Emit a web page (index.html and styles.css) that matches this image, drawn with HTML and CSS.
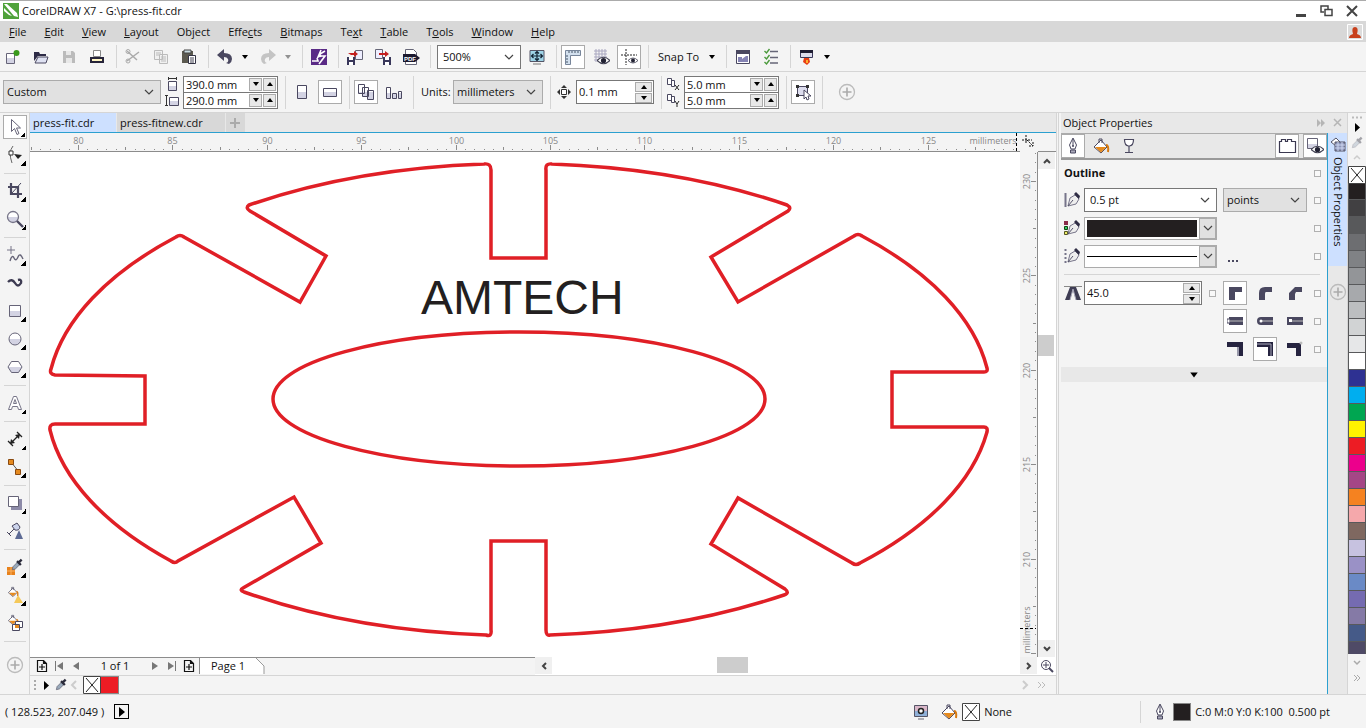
FILE: index.html
```html
<!DOCTYPE html>
<html lang="en">
<head>
    <meta charset="UTF-8">
    <meta name="viewport" content="width=device-width, initial-scale=1.0">
    <title>CorelDRAW X7 - G:\press-fit.cdr</title>
    <link rel="stylesheet" href="styles.css">
</head>
<body>
    <!-- shared icon shapes -->
    <svg class="defs" width="0" height="0" aria-hidden="true">
        <defs>
            <linearGradient id="shade" x1="0" y1="0" x2="0" y2="1">
                <stop offset=".5" stop-color="#fff"/><stop offset=".5" stop-color="#d3d3e3"/>
            </linearGradient>
            <symbol id="chev" viewBox="0 0 12 12"><path d="M2 4l4 4 4-4" fill="none" stroke="#444" stroke-width="1.2"/></symbol>
            <symbol id="tri" viewBox="0 0 8 8"><path d="M1 2h6L4 6z"/></symbol>
            <symbol id="plus" viewBox="0 0 18 18"><circle cx="9" cy="9" r="7.500" fill="none" stroke="#bbb" stroke-width="1.3"/><path d="M9 4.500v9M4.500 9h9" stroke="#aaa" stroke-width="1.6"/></symbol>
            <symbol id="nib" viewBox="0 0 18 18"><path d="M9 1L5.500 8 7 12h4l1.500-4z" fill="#fff" stroke="#4a4860"/><path d="M9 2v7M6.500 13h5v3h-5z" stroke="#4a4860" fill="#aab"/><circle cx="9" cy="9" r="1" fill="#4a4860"/></symbol>
            <symbol id="bucket" viewBox="0 0 18 18"><path d="M2 10l7-7 6 7-6 6z" fill="#fff" stroke="#4a4860"/><path d="M3 10h11.500L9 15.500z" fill="#e58a1f"/><path d="M7 6V2h3v4" fill="none" stroke="#4a4860"/><path d="M14 8q3 0 2 7" fill="none" stroke="#d87a10" stroke-width="2"/></symbol>
            <symbol id="dropper" viewBox="0 0 18 18"><path d="M3 15l1-4 6-6 3 3-6 6z" fill="#9ab" stroke="#667"/><path d="M9 4l5 5M11 6l4-4" stroke="#2b2b3b" stroke-width="3"/></symbol>
            <symbol id="none" viewBox="0 0 18 18"><path d="M.5.5h17v17H.5z" fill="#fff" stroke="#444"/><path d="M3 2l12 14M15 2L3 16" stroke="#222"/></symbol>
            <symbol id="pen" viewBox="0 0 18 18"><path d="M4 15l2-8 5-3 4 4-3 5z" fill="#eee" stroke="#77758a"/><path d="M4 15l5-6" stroke="#55536a"/><path d="M10 3l2-2 4 4-1 3z" fill="#2f2d44"/></symbol>
            <symbol id="addpage" viewBox="0 0 12 12"><path d="M1.500.5h6l3 3v8h-9zM7.500.5v3h3M6 4v6M3 7h6" fill="none" stroke="#111" stroke-width="1.2"/></symbol>
            <symbol id="eye" viewBox="0 0 12 8"><path d="M0 4q6-6 12 0-6 6-12 0z" fill="#fff" stroke="#445"/><circle cx="6" cy="4" r="2.400" fill="#223"/></symbol>
        </defs>
    </svg>

    <header class="titlebar">
        <svg width="16" height="16" viewBox="0 0 16 16"><path fill="#4fa23a" d="M0 0h16v16H0z"/><path fill="#fff" d="M1 1l3 0 10 9 1 4-4-1zM1 5l8 8-3-1L1 8z"/></svg>
        <h1>CorelDRAW X7 - G:\press-fit.cdr</h1>
        <div class="window-buttons">
            <button aria-label="Minimize"><svg width="12" height="12"><path d="M1 10.500h10" stroke="#444" stroke-width="3"/></svg></button>
            <button aria-label="Restore"><svg width="13" height="12"><path d="M4 7H1V1h7v3M5 4.500h7v6H5z" fill="none" stroke="#444" stroke-width="1.500"/></svg></button>
            <button aria-label="Close"><svg width="12" height="12"><path d="M1 1l10 10M11 1L1 11" stroke="#444" stroke-width="2"/></svg></button>
        </div>
    </header>

    <nav class="menubar">
        <button><u>F</u>ile</button>
        <button><u>E</u>dit</button>
        <button><u>V</u>iew</button>
        <button><u>L</u>ayout</button>
        <button>Ob<u>j</u>ect</button>
        <button>Effe<u>c</u>ts</button>
        <button><u>B</u>itmaps</button>
        <button>Te<u>x</u>t</button>
        <button><u>T</u>able</button>
        <button>T<u>o</u>ols</button>
        <button><u>W</u>indow</button>
        <button><u>H</u>elp</button>
        <button class="account" aria-label="Sign in"><svg width="16" height="16"><path d="M.5.5h15v15H.5z" fill="#ddd" stroke="#fff"/><path d="M2 14q0-3 4-4Q4 3 8 3t2 7q4 1 4 4z" fill="#c8401c"/></svg></button>
    </nav>

    <div class="toolbar">
        <button class="tool" aria-label="New"><svg width="18" height="18"><path d="M2.500 5.500h8v10h-8z" fill="url(#shade)" stroke="#666478"/><circle cx="12.500" cy="5" r="3" fill="#3a9a1c"/></svg></button>
        <button class="tool" aria-label="Open"><svg width="18" height="18"><path d="M2 13V4h5l1 2h6v2H6z" fill="#2d2b46"/><path d="M3 15l3-6h10l-2 6z" fill="#dfe2f2" stroke="#4a4860"/></svg></button>
        <button class="tool" aria-label="Save"><svg width="18" height="18"><path d="M3 3h10l2 2v10H3z" fill="#bbb"/><path d="M6 3h5v4H6zM6 10h6v5H6z" fill="#e8e8e8"/></svg></button>
        <button class="tool" aria-label="Print"><svg width="18" height="18"><path d="M5.500 2.500h7v6h-7z" fill="#fff" stroke="#888"/><path d="M2 9h14v6H2z" fill="#26243a"/><path d="M4 11h10v2H4z" fill="#fff6c4"/></svg></button>
        <span class="sep"></span>
        <button class="tool" aria-label="Cut"><svg width="18" height="18"><path d="M3 3l10 9M3 13l12-9" stroke="#aaa" stroke-width="1.500"/><circle cx="4" cy="3.500" r="2" fill="none" stroke="#aaa"/><circle cx="4" cy="13" r="2" fill="none" stroke="#aaa"/></svg></button>
        <button class="tool" aria-label="Copy"><svg width="18" height="18"><path d="M2.500 2.500h8v9h-8zM7.500 6.500h8v9h-8z" fill="#f0f0f0" stroke="#bbb"/><path d="M9 9h5M9 11h5M9 13h5M4 5h5M4 7h3" stroke="#bbb"/></svg></button>
        <button class="tool" aria-label="Paste"><svg width="18" height="18"><path d="M2 3h11v12H2z" fill="#5b594f"/><path d="M4 2h7v3H4z" fill="#c9dbe0" stroke="#444"/><path d="M8.500 7.500h7v8h-7z" fill="#fff" stroke="#334"/><path d="M10 10h4M10 12h4M10 14h4" stroke="#445"/></svg></button>
        <span class="sep"></span>
        <button class="tool" aria-label="Undo"><svg width="18" height="18"><path d="M1 7l7-6v4q8 0 8 6 0 3-3 5l-3-1q3-1 2-4-1-2-4-2v4z" fill="#4a4860"/></svg></button>
        <button class="drop" aria-label="Undo list"><svg width="8" height="8"><use href="#tri"/></svg></button>
        <button class="tool" aria-label="Redo"><svg width="18" height="18"><path d="M17 7l-7-6v4q-8 0-8 6 0 3 3 5l3-1q-3-1-2-4 1-2 4-2v4z" fill="#c4c4c4"/></svg></button>
        <button class="drop dim" aria-label="Redo list"><svg width="8" height="8"><use href="#tri"/></svg></button>
        <span class="sep"></span>
        <button class="tool" aria-label="Search content"><svg width="18" height="18"><path d="M1 1h16v16H1z" fill="#5a2a86"/><path d="M11 2L8 9l2-1 5 0-6 8M2 13h6l-1-3M15 3l-5 3 1 3" fill="none" stroke="#fff" stroke-width="1.600"/></svg></button>
        <span class="sep"></span>
        <button class="tool" aria-label="Import"><svg width="18" height="18"><path d="M9.500 2.500h7v9h-7z" fill="#eef" stroke="#667"/><path d="M2 5h6V3l4 3-4 3V7H5" fill="#c41f1f"/><path d="M1 9h8v8H1z" fill="#39375a"/><path d="M3 9h4v3H3zM3 14h4v3H3z" fill="#fff"/></svg></button>
        <button class="tool" aria-label="Export"><svg width="18" height="18"><path d="M1.500 1.500h7v9h-7z" fill="#eef" stroke="#667"/><path d="M5 5h6V3l4 3-4 3V7H5" fill="#c41f1f"/><path d="M9 9h8v8H9z" fill="#39375a"/><path d="M11 9h4v3h-4zM11 14h4v3h-4z" fill="#fff"/></svg></button>
        <button class="tool" aria-label="Publish to PDF"><svg width="18" height="18"><path d="M3.500 1.500h8l3 3v12h-11z" fill="#fff" stroke="#667"/><path d="M1 6h12l5 4-5 4H1z" fill="#1c1a30"/><text x="2" y="13" class="pdf-label">PDF</text></svg></button>
        <span class="sep"></span>
        <div class="combo zoom-level">
            <select aria-label="Zoom levels"><option>500%</option></select>
            <svg width="12" height="12"><use href="#chev"/></svg>
        </div>
        <button class="tool" aria-label="Full-screen preview"><svg width="18" height="18"><path d="M2 2.500h14v11H2z" fill="#9fd4e8" stroke="#556"/><path d="M9 4v8M4 8h10M7 5.500L9 3.500l2 2M7 10.500l2 2 2-2M5.500 6l-2 2 2 2M12.500 6l2 2-2 2" fill="none" stroke="#123" stroke-width="1.200"/><path d="M5 16h8" stroke="#777"/></svg></button>
        <span class="sep"></span>
        <button class="tool on" aria-label="Show rulers"><svg width="18" height="18"><path d="M1.500 2.500h15v5h-10v9h-5z" fill="#d3e0ee" stroke="#77859a"/><path d="M5 3v2M8 3v2M11 3v2M14 3v2M2 8h2M2 11h2M2 14h2" stroke="#456"/></svg></button>
        <button class="tool" aria-label="Show grid"><svg width="18" height="18"><path d="M2 3h13M2 6h13M2 9h13M2 12h13M4 1v13M7 1v13M10 1v13M13 1v13" stroke="#a9a7c0"/><use href="#eye" x="5" y="8" width="13" height="9"/></svg></button>
        <button class="tool on" aria-label="Show guidelines"><svg width="18" height="18"><path d="M1 7h16M6 1v16" stroke="#222" stroke-dasharray="2 1"/><use href="#eye" x="8" y="9" width="10" height="7"/></svg></button>
        <span class="sep"></span>
        <button class="snap">Snap To <svg width="8" height="8"><use href="#tri"/></svg></button>
        <span class="sep"></span>
        <button class="tool" aria-label="Options"><svg width="18" height="18"><path d="M2.500 2.500h13v13h-13z" fill="#fff" stroke="#4a4860"/><path d="M2 2h14v4H2z" fill="#4a4860"/><path d="M4 9h4v2l4-3h2v6H4z" fill="#8583b4"/></svg></button>
        <button class="tool" aria-label="Object styles"><svg width="18" height="18"><path d="M8 3.500h8M8 9.500h8M8 15h8" stroke="#667" stroke-width="1.500"/><path d="M2.500 3l2 2 3-4M2.500 9l2 2 3-4M2.500 14l2 2 3-4" fill="none" stroke="#4b9a3c" stroke-width="1.400"/></svg></button>
        <span class="sep"></span>
        <button class="tool" aria-label="Application launcher"><svg width="18" height="18"><path d="M2.500 2.500h12v7h-12z" fill="#dcdcec" stroke="#39375a"/><path d="M2 2h13v3H2z" fill="#1f1d33"/><path d="M6 10h5l1 4-3 3-4-3z" fill="#e83d14"/><path d="M8 12h2v3H8z" fill="#ffb02e"/></svg></button>
        <button class="drop" aria-label="Launch list"><svg width="8" height="8"><use href="#tri"/></svg></button>
    </div>

    <div class="toolbar propbar">
        <div class="combo flat page-size">
            <select aria-label="Page size"><option>Custom</option></select>
            <svg width="12" height="12"><use href="#chev"/></svg>
        </div>
        <div class="pair">
            <svg width="14" height="14"><path d="M3.500 4.500h8v9h-8z" fill="url(#shade)" stroke="#4a4860"/><path d="M3 1.500h9M3.500 0v3M11.500 0v3" stroke="#333"/></svg>
            <div class="spin top"><input aria-label="Page width" value="390.0 mm"><button aria-label="Less"><svg width="8" height="8"><use href="#tri"/></svg></button><button class="up" aria-label="More"><svg width="8" height="8"><use href="#tri"/></svg></button></div>
            <svg width="14" height="14"><path d="M4.500 4.500h9v8h-9z" fill="url(#shade)" stroke="#4a4860"/><path d="M1.500 2v11M0 2.500h3M0 12.500h3" stroke="#333"/></svg>
            <div class="spin"><input aria-label="Page height" value="290.0 mm"><button aria-label="Less"><svg width="8" height="8"><use href="#tri"/></svg></button><button class="up" aria-label="More"><svg width="8" height="8"><use href="#tri"/></svg></button></div>
        </div>
        <span class="sep"></span>
        <button class="tool" aria-label="Portrait"><svg width="18" height="18"><path d="M4.500 2.500h9v13h-9z" fill="url(#shade)" stroke="#4a4860"/></svg></button>
        <button class="tool on" aria-label="Landscape"><svg width="18" height="18"><path d="M2.500 5.500h13v8h-13z" fill="url(#shade)" stroke="#4a4860"/></svg></button>
        <span class="sep"></span>
        <button class="tool on" aria-label="All pages"><svg width="18" height="18"><path d="M1.500 1.500h6v9h-6zM5.500 4.500h6v9h-6zM10.500 7.500h6v9h-6z" fill="url(#shade)" stroke="#4a4860"/></svg></button>
        <button class="tool" aria-label="Current page"><svg width="18" height="18"><path d="M1.500 4.500h4v11h-4zM7.500 10.500h4v5h-4zM13.500 8.500h3v7h-3z" fill="url(#shade)" stroke="#4a4860"/></svg></button>
        <span class="sep"></span>
        <div class="field">
            <label for="units">Units:</label>
            <div class="combo flat units">
                <select id="units"><option>millimeters</option></select>
                <svg width="12" height="12"><use href="#chev"/></svg>
            </div>
        </div>
        <span class="sep"></span>
        <div class="field nudge">
            <svg width="18" height="14"><path d="M6.500 4.500h5v5h-5z" fill="#fff" stroke="#333"/><path d="M9 0l3 3H6zM9 14l3-3H6zM2 7l3-3v6zM16 7l-3-3v6z" fill="#333"/></svg>
            <div class="spin tall"><input aria-label="Nudge distance" value="0.1 mm"><button class="up" aria-label="More"><svg width="8" height="8"><use href="#tri"/></svg></button><button aria-label="Less"><svg width="8" height="8"><use href="#tri"/></svg></button></div>
        </div>
        <span class="sep"></span>
        <div class="pair">
            <svg width="14" height="14"><path d="M1.500 1.500h4v6h-4zM5.500 3.500h3v6h-3z" fill="#fff" stroke="#4a4860"/><path d="M9 8l4 5M13 8l-4 5" stroke="#222"/></svg>
            <div class="spin top"><input aria-label="Duplicate X" value="5.0 mm"><button aria-label="Less"><svg width="8" height="8"><use href="#tri"/></svg></button><button class="up" aria-label="More"><svg width="8" height="8"><use href="#tri"/></svg></button></div>
            <svg width="14" height="14"><path d="M1.500 1.500h4v6h-4zM5.500 3.500h3v6h-3z" fill="#fff" stroke="#4a4860"/><path d="M9 8l2 3 2-3M11 11v3" fill="none" stroke="#222"/></svg>
            <div class="spin"><input aria-label="Duplicate Y" value="5.0 mm"><button aria-label="Less"><svg width="8" height="8"><use href="#tri"/></svg></button><button class="up" aria-label="More"><svg width="8" height="8"><use href="#tri"/></svg></button></div>
        </div>
        <span class="sep"></span>
        <button class="tool on" aria-label="Treat as filled"><svg width="18" height="18"><path d="M3.500 3.500h10v9h-10z" fill="#dde" stroke="#4a4860"/><path d="M2 2h3v3H2zM12 2h3v3h-3zM2 11h3v3H2z" fill="#333"/><path d="M10 7v9l2-2 1 3 2-1-1-3h3z" fill="#fff" stroke="#4a4860"/></svg></button>
        <span class="sep"></span>
        <button class="tool quick" aria-label="Quick customize"><svg width="18" height="18"><use href="#plus"/></svg></button>
    </div>

    <main class="main">
        <aside class="toolbox">
            <button class="tool on fly" aria-label="Pick"><svg width="18" height="18"><path d="M5.500 1.500v12l3-3 2.500 6 2-1-2.500-5.500h4z" fill="#fff" stroke="#666478"/></svg></button>
            <button class="tool fly" aria-label="Shape"><svg width="18" height="18"><path d="M7 0Q2 6 6 17" fill="none" stroke="#666"/><path d="M3 5h4v4H3z" fill="#fff" stroke="#333"/><path d="M8 8l8 1-4 4z" fill="#222"/></svg></button>
            <span class="sep"></span>
            <button class="tool fly" aria-label="Crop"><svg width="18" height="18"><path d="M5 1v11h11M2 5h10v11" fill="none" stroke="#4a4860" stroke-width="2.200"/><path d="M15 1L6 11" stroke="#4a4860"/></svg></button>
            <button class="tool fly" aria-label="Zoom"><svg width="18" height="18"><circle cx="7" cy="7" r="5.500" fill="url(#shade)" stroke="#777588" stroke-width="1.300"/><path d="M11 11l6 6" stroke="#4a4860" stroke-width="2.400"/></svg></button>
            <span class="sep"></span>
            <button class="tool fly" aria-label="Freehand"><svg width="18" height="18"><path d="M5 0v8M1 4h8" stroke="#777588"/><path d="M4 15q2-7 4-3t4-1 5 2" fill="none" stroke="#666478" stroke-width="1.400"/></svg></button>
            <button class="tool" aria-label="Artistic media"><svg width="18" height="18"><path d="M2 8q4-4 7 1t6 0q1-4-3-3" fill="none" stroke="#3d3b52" stroke-width="2.400"/></svg></button>
            <button class="tool fly" aria-label="Rectangle"><svg width="18" height="18"><path d="M3.500 3.500h11v11h-11z" fill="url(#shade)" stroke="#666478"/></svg></button>
            <button class="tool fly" aria-label="Ellipse"><svg width="18" height="18"><circle cx="9" cy="9" r="6" fill="url(#shade)" stroke="#666478"/></svg></button>
            <button class="tool fly" aria-label="Polygon"><svg width="18" height="18"><path d="M2 9l3.500-5.500h7L16 9l-3.500 5.500h-7z" fill="url(#shade)" stroke="#666478"/></svg></button>
            <span class="sep"></span>
            <button class="tool fly" aria-label="Text"><svg width="18" height="18"><path d="M2.500 15.500L7.500 2.500h3l5 13h-3l-1-3h-5l-1 3zM7.500 9.500h3l-1.500-4z" fill="#fff" stroke="#777588" fill-rule="evenodd"/></svg></button>
            <span class="sep"></span>
            <button class="tool fly" aria-label="Dimension"><svg width="18" height="18"><path d="M4 14L14 4M2 11l5 5M11 2l5 5" stroke="#222" stroke-width="1.300"/><path d="M4 14l1-5 4 4zM14 4l-1 5-4-4z" fill="#222"/></svg></button>
            <button class="tool fly" aria-label="Connector"><svg width="18" height="18"><path d="M5 4l8 10" stroke="#555"/><path d="M2.500 1.500h5v5h-5zM9.500 11.500h5v5h-5z" fill="#e58a1f" stroke="#8a4a10"/></svg></button>
            <span class="sep"></span>
            <button class="tool fly" aria-label="Drop shadow"><svg width="18" height="18"><path d="M5 5h11v11H5z" fill="#8d8ba8"/><path d="M2.500 2.500h10v10h-10z" fill="#fff" stroke="#666478"/></svg></button>
            <button class="tool" aria-label="Transparency"><svg width="18" height="18"><path d="M6 4l5-3 3 4q-1 4-5 3zM8 7l-5 5M1 10l4 4" fill="#ccd4ec" stroke="#4a4860"/><path d="M13 8l4 9H9z" fill="#5d6a94"/></svg></button>
            <span class="sep"></span>
            <button class="tool fly" aria-label="Color eyedropper"><svg width="18" height="18"><path d="M1 9h8v8H1z" fill="#e8821c"/><path d="M1 13h8M5 9v8" stroke="#f8b060"/><use href="#dropper" x="4" y="0" width="14" height="14"/></svg></button>
            <button class="tool fly" aria-label="Interactive fill"><svg width="18" height="18"><use href="#bucket" x="1" y="0" width="12" height="12"/><path d="M12 9l5 8H8z" fill="#f5c95a"/></svg></button>
            <button class="tool" aria-label="Smart fill"><svg width="18" height="18"><use href="#bucket" x="1" y="0" width="12" height="12"/><path d="M9.500 7.500h7v6h-7z" fill="#fff" stroke="#4a4860"/><path d="M6.500 10.500h7v6h-7z" fill="#fff" stroke="#4a4860"/><path d="M9 11h4v3H9z" fill="#e58a1f"/></svg></button>
            <span class="sep"></span>
            <button class="tool more" aria-label="Quick customize"><svg width="18" height="18"><use href="#plus"/></svg></button>
        </aside>

        <section class="workspace">
            <div class="doc-tabs">
                <button class="active">press-fit.cdr</button>
                <button>press-fitnew.cdr</button>
                <button class="new-tab" aria-label="New tab"><svg width="12" height="12"><path d="M6 1v10M1 6h10" stroke="#aaa" stroke-width="2"/></svg></button>
            </div>

            <div class="view">
                <div class="ruler-h"><svg id="rulerH" width="100%" height="19"></svg></div>
                <div class="ruler-corner"><svg width="18" height="19"><path d="M2 7h10M6 2v8" stroke="#111" stroke-dasharray="2 1"/><path d="M7 7l6 6M13 9v4H9" fill="none" stroke="#111" stroke-dasharray="2 1"/></svg></div>
                <div class="ruler-end"></div>
                <svg class="canvas" viewBox="30 152 990 505" preserveAspectRatio="xMinYMin slice">
                    <g class="outline">
                        <path d="M249 205A472 236 0 0 1 484 164Q491 163 491 170V258H546L546 170Q545 163 552 164A472 236 0 0 1 787 205Q792 208 788 211L711 257 738 302 854 236Q858 233 862 236A472 236 0 0 1 987 368Q988 372 984 372H892V427H984Q988 427 987 432A472 236 0 0 1 860 563Q856 566 852 563L738 498 711 544 785 589Q790 593 784 595A472 236 0 0 1 550 635Q546 636 546 630V541H491V630Q492 637 486 635A472 236 0 0 1 244 592Q239 590 243 588L321 543 294 497 178 561Q175 564 171 561A472 236 0 0 1 50 430Q49 424 55 424H145V376L55 375Q49 374 51 369A472 236 0 0 1 176 237Q180 234 184 237L300 302 326 256 250 211Q245 208 249 205Z"/>
                        <ellipse cx="519" cy="399" rx="246" ry="67"/>
                    </g>
                    <text x="421" y="314" class="art-text">AMTECH</text>
                </svg>
                <div class="ruler-v"><svg id="rulerV" width="17" height="100%"></svg></div>
                <div class="scroll-v">
                    <button aria-label="Scroll up"><svg width="12" height="12"><path d="M3 8l3-3 3 3" fill="none" stroke="#444" stroke-width="2"/></svg></button>
                    <span class="space-before"></span>
                    <span class="thumb"></span>
                    <span class="space-after"></span>
                    <button aria-label="Scroll down"><svg width="12" height="12"><path d="M3 4l3 3 3-3" fill="none" stroke="#444" stroke-width="2"/></svg></button>
                </div>
            </div>

            <div class="page-row">
                <div class="page-nav">
                    <button aria-label="Add page before"><svg width="12" height="12"><use href="#addpage"/></svg></button>
                    <button aria-label="First page"><svg width="10" height="10"><path d="M1 0h1v10H1zM9 1v8L3 5z" fill="#777"/></svg></button>
                    <button aria-label="Previous page"><svg width="10" height="10"><path d="M8 1v8L2 5z" fill="#777"/></svg></button>
                    <span class="page-count">1 of 1</span>
                    <button aria-label="Next page"><svg width="10" height="10"><path d="M2 1v8l6-4z" fill="#777"/></svg></button>
                    <button aria-label="Last page"><svg width="10" height="10"><path d="M8 0h1v10H8zM1 1v8l6-4z" fill="#777"/></svg></button>
                    <button aria-label="Add page after"><svg width="12" height="12"><use href="#addpage"/></svg></button>
                    <button class="page-tab">Page 1</button>
                    <svg class="tab-slant" width="9" height="16"><path d="M0 0l8 8v8H0z" fill="#fff"/><path d="M0 0l8 8v8" fill="none" stroke="#999"/></svg>
                </div>
                <div class="scroll-h">
                    <button aria-label="Scroll left"><svg width="12" height="12"><path d="M8 3L5 6l3 3" fill="none" stroke="#444" stroke-width="2"/></svg></button>
                    <span class="h-before"></span>
                    <span class="thumb"></span>
                    <span class="h-after"></span>
                    <button aria-label="Scroll right"><svg width="12" height="12"><path d="M4 3l3 3-3 3" fill="none" stroke="#444" stroke-width="2"/></svg></button>
                </div>
                <button class="navigator" aria-label="Navigator"><svg width="14" height="14"><circle cx="6" cy="6" r="4.500" fill="#fff" stroke="#4a4860"/><path d="M6 3v6M3 6h6" stroke="#4a4860"/><path d="M9 9l4 4" stroke="#4a4860" stroke-width="2"/></svg></button>
            </div>

            <div class="doc-palette">
                <svg width="22" height="16"><path d="M3 3v12" stroke="#aaa" stroke-width="2" stroke-dasharray="2 2"/><path d="M12 4v9l5-4.500z"/></svg>
                <svg width="14" height="14"><use href="#dropper"/></svg>
                <svg width="12" height="12"><path d="M8 2L4 6l4 4" fill="none" stroke="#ccc" stroke-width="2"/></svg>
                <button class="chip" aria-label="No color"><svg width="18" height="18"><use href="#none"/></svg></button>
                <button class="chip red" aria-label="Red"></button>
                <span class="scroll-marks"><svg width="12" height="12"><path d="M4 2l4 4-4 4" fill="none" stroke="#ccc" stroke-width="2"/></svg><svg width="10" height="10"><path d="M2 2l3 3-3 3M6 2l3 3-3 3" fill="none" stroke="#bbb"/></svg></span>
            </div>
        </section>

        <aside class="dock">
            <div class="dock-head">
                <h2>Object Properties</h2>
                <button aria-label="Collapse"><svg width="10" height="10"><path d="M1 1l4 4-4 4zM5 1l4 4-4 4z" fill="#b5b5b5"/></svg></button>
                <button aria-label="Close docker"><svg width="10" height="10"><path d="M1 1l7 7M8 1L1 8" stroke="#b5b5b5" stroke-width="1.500"/></svg></button>
            </div>
            <div class="dock-body">
                <div class="panel">
                    <div class="panel-tabs">
                        <button class="tool on" aria-label="Outline"><svg width="18" height="18"><use href="#nib"/></svg></button>
                        <button class="tool" aria-label="Fill"><svg width="18" height="18"><use href="#bucket"/></svg></button>
                        <button class="tool" aria-label="Transparency"><svg width="18" height="18"><path d="M4.500 2.500h9q0 6-4 6.500h-1Q4.500 8.500 4.500 2.500zM9 9v6M5 15.500h8" fill="#fff" stroke="#4a4860" stroke-width="1.200"/></svg></button>
                        <button class="tool on push" aria-label="Tabbed view"><svg width="20" height="18"><path d="M2.500 4.500V15.500h16v-11h-4v-2h-4v2h-2v-2h-4v2z" fill="#fff" stroke="#3a3850" stroke-width="1.200"/></svg></button>
                        <button class="tool on" aria-label="Show overprint"><svg width="18" height="18"><path d="M1.500 1.500h10v10h-10z" fill="url(#shade)" stroke="#666478"/><use href="#eye" x="5" y="8" width="13" height="9"/></svg></button>
                    </div>
                    <div class="props">
                        <div class="row title">
                            <h3>Outline</h3>
                            <input type="checkbox" aria-label="Outline override">
                        </div>
                        <div class="row">
                            <svg width="18" height="18"><path d="M1.500 2v14" stroke="#77758a" stroke-width="2"/><use href="#pen"/></svg>
                            <div class="combo width"><select aria-label="Outline width"><option>0.5 pt</option></select><svg width="12" height="12"><use href="#chev"/></svg></div>
                            <div class="combo flat unit"><select aria-label="Width units"><option>points</option></select><svg width="12" height="12"><use href="#chev"/></svg></div>
                            <input type="checkbox" aria-label="Width override">
                        </div>
                        <div class="row">
                            <svg width="18" height="18"><path d="M0 2h4v4H0z" fill="#8a2a4a"/><path d="M.5 7.500h3v3h-3z" fill="#3c6" stroke="#141"/><path d="M.5 12.500h3v3h-3z" fill="#ee6" stroke="#552"/><use href="#pen"/></svg>
                            <button class="picker" aria-label="Outline color"><span class="ink"></span><span class="arrow"><svg width="12" height="12"><use href="#chev"/></svg></span></button>
                            <input type="checkbox" aria-label="Color override">
                        </div>
                        <div class="row">
                            <svg width="18" height="18"><path d="M1.500 2v14" stroke="#77758a" stroke-width="2" stroke-dasharray="2 2"/><use href="#pen"/></svg>
                            <button class="picker" aria-label="Line style"><span class="line"></span><span class="arrow"><svg width="12" height="12"><use href="#chev"/></svg></span></button>
                            <button class="dots" aria-label="Settings"><svg width="14" height="14"><path d="M3 11h2v2H3zM7 11h2v2H7zM11 11h2v2h-2z" fill="#4a4860"/></svg></button>
                            <input type="checkbox" aria-label="Style override">
                        </div>
                        <hr>
                        <div class="row">
                            <svg width="18" height="18"><path d="M0 2.500h18" stroke="#888"/><path d="M1 16L6 3h6l5 13h-5L9 6 6 16z" fill="#3f3d54"/><path d="M6 16L9 5l3 11" fill="none" stroke="#aaa8bb"/></svg>
                            <div class="spin tall miter"><input aria-label="Miter limit" value="45.0"><button class="up" aria-label="More"><svg width="8" height="8"><use href="#tri"/></svg></button><button aria-label="Less"><svg width="8" height="8"><use href="#tri"/></svg></button></div>
                            <input type="checkbox" class="inner" aria-label="Miter override">
                            <div class="choices">
                                <button class="tool on" aria-label="Mitered corners"><svg width="16" height="16"><path d="M2 2h13v5H8v8H2z" fill="#4a4860"/></svg></button>
                                <button class="tool" aria-label="Round corners"><svg width="16" height="16"><path d="M2 15V8q0-6 6-6h7v5H9q-1 0-1 2v6z" fill="#4a4860"/></svg></button>
                                <button class="tool" aria-label="Beveled corners"><svg width="16" height="16"><path d="M2 15V8l6-6h7v5H9l-1 2v6z" fill="#4a4860"/></svg></button>
                            </div>
                            <input type="checkbox" aria-label="Corner override">
                        </div>
                        <div class="row">
                            <div class="choices">
                                <button class="tool on" aria-label="Square cap"><svg width="16" height="16"><path d="M2 4h14v8H2z" fill="#4a4860"/><path d="M0 6h3v4H0z" fill="#fff" stroke="#4a4860"/><path d="M3 8h13" stroke="#bbb"/></svg></button>
                                <button class="tool" aria-label="Round cap"><svg width="16" height="16"><path d="M16 4H4a4 4 0 0 0 0 8h12z" fill="#4a4860"/><path d="M5 8h11" stroke="#bbb"/><circle cx="4" cy="8" r="1.500" fill="#fff"/></svg></button>
                                <button class="tool" aria-label="Extended cap"><svg width="16" height="16"><path d="M0 4h16v8H0z" fill="#4a4860"/><path d="M4 8h12" stroke="#bbb"/><path d="M2 6h3v3H2z" fill="#fff"/></svg></button>
                            </div>
                            <input type="checkbox" aria-label="Cap override">
                        </div>
                        <div class="row">
                            <div class="choices">
                                <button class="tool" aria-label="Outside outline"><svg width="16" height="16"><path d="M0 1h16v14h-5V6H0z" fill="#262440"/><path d="M11 15V6" stroke="#99a" stroke-width="2"/></svg></button>
                                <button class="tool on" aria-label="Centered outline"><svg width="16" height="16"><path d="M0 1h16v14h-5V6H0z" fill="#262440"/><path d="M0 3h14v12" fill="none" stroke="#aab"/></svg></button>
                                <button class="tool" aria-label="Inside outline"><svg width="16" height="16"><path d="M0 2h14v13H9V7H0z" fill="#262440"/><circle cx="14" cy="2" r="1.500" fill="#bbb"/></svg></button>
                            </div>
                            <input type="checkbox" aria-label="Position override">
                        </div>
                    </div>
                    <button class="expand" aria-label="More options"><svg width="10" height="10" viewBox="0 0 8 8"><use href="#tri"/></svg></button>
                </div>
                <div class="dock-tabs">
                    <button class="dock-tab">
                        <svg width="16" height="16"><path d="M1 6l5-4 4 4-4 4z" fill="#fff" stroke="#556"/><path d="M5 6h10v9H5z" fill="#8d95b8" stroke="#556"/><path d="M5 9h10M5 12h10M8 6v9M12 6v9" stroke="#cdd6f0"/></svg>
                        <span>Object Properties</span>
                    </button>
                    <button class="add-docker" aria-label="Quick customize"><svg width="18" height="18"><use href="#plus"/></svg></button>
                </div>
            </div>
        </aside>

        <aside class="palette">
            <svg width="18" height="53"><path d="M4 4.500h11" stroke="#bbb" stroke-width="2" stroke-dasharray="2 2"/><path d="M7 10v9l5-4.500z"/><g opacity=".4"><use href="#dropper" x="2" y="23" width="14" height="14"/></g><path d="M6 46l3-3 3 3" fill="none" stroke="#ccc" stroke-width="1.500"/></svg>
            <div class="swatches" id="swatches">
                <button aria-label="No color"><svg width="18" height="18"><use href="#none"/></svg></button>
            </div>
            <svg width="18" height="40"><path d="M6 7l3 3 3-3" fill="none" stroke="#aaa" stroke-width="1.500"/><path d="M6 21l3 3-3 3M9 21l3 3-3 3" fill="none" stroke="#aaa"/></svg>
        </aside>
    </main>

    <footer class="status">
        <span>( 128.523, 207.049 )</span>
        <button class="play" aria-label="Object details"><svg width="8" height="10"><path d="M1 0v10l6-5z"/></svg></button>
        <div class="fill-info">
            <svg width="18" height="18"><path d="M2.500 2.500h13v11h-13z" fill="#d9b7c9" stroke="#556"/><path d="M3 8h12v5H3z" fill="#8fb0d8"/><circle cx="9" cy="8" r="2.500" fill="#fff" stroke="#222" stroke-width="1.500"/><path d="M6 16h6" stroke="#667"/></svg>
            <svg width="18" height="18"><use href="#bucket"/></svg>
            <svg width="18" height="18"><use href="#none"/></svg>
            <span>None</span>
        </div>
        <div class="outline-info">
            <svg width="18" height="18"><use href="#nib"/></svg>
            <span class="ink-chip"></span>
            <span>C:0 M:0 Y:0 K:100&nbsp; 0.500 pt</span>
        </div>
    </footer>

    <script src="script.js"></script>
</body>
</html>
```

FILE: styles.css
```css
* {
    box-sizing: border-box;
}
body {
    margin: 0;
    height: 100vh;
    display: flex;
    flex-direction: column;
    overflow: hidden;
    background: #f4f4f4;
    color: #111;
    font-family: "Open Sans", "Noto Sans", sans-serif;
    font-size: 11px;
    line-height: 16px;
}
button, input, select {
    font: inherit;
    color: inherit;
    margin: 0;
    padding: 0;
    border: 0;
    border-radius: 0;
    background: none;
}
svg {
    display: block;
    flex: none;
}
h1, h2, h3 {
    margin: 0;
    font-size: 11px;
    font-weight: normal;
}
.defs {
    position: absolute;
}

/* title and menu */
.titlebar {
    display: flex;
    align-items: center;
    gap: 3px;
    height: 21px;
    padding: 0 8px 0 3px;
    border-top: 1px solid #ababab;
    background: #fff;
}
.window-buttons {
    display: flex;
    gap: 13px;
    margin-left: auto;
}
.menubar {
    display: flex;
    align-items: center;
    height: 21px;
    background: #d8d8d8;
}
.menubar button {
    padding: 0 9px;
}
.menubar .account {
    margin-left: auto;
    padding: 0 3px;
}

/* toolbars */
.toolbar {
    display: flex;
    align-items: center;
    gap: 4px;
    height: 30px;
    padding-left: 1px;
    border-bottom: 1px solid #d5d5d5;
}
.propbar {
    height: 41px;
    padding-left: 3px;
}
.tool {
    display: flex;
    flex: none;
    align-items: center;
    justify-content: center;
    width: 24px;
    height: 24px;
}
.tool.on {
    border: 1px solid #ababab;
    background: #fff;
}
.sep {
    flex: none;
    width: 1px;
    height: 23px;
    margin-left: 3px;
    background: #d5d5d5;
}
.propbar .sep {
    height: 33px;
}
.drop {
    width: 12px;
    margin: 0 1px 0 -2px;
    padding: 0 2px;
}
.drop.dim {
    opacity: .4;
}
.snap {
    display: flex;
    align-items: center;
    justify-content: space-between;
    width: 66px;
    padding: 0 3px 0 5px;
}
.quick {
    width: 40px;
}
.pdf-label {
    font: bold 6px "Liberation Sans", sans-serif;
    fill: #fff;
}

/* form controls */
.combo {
    display: grid;
    grid-template-columns: 1fr 17px;
    align-items: center;
    height: 24px;
    border: 1px solid #777;
    background: #fff;
}
.combo select {
    grid-area: 1 / 1 / 2 / 3;
    height: 100%;
    padding-left: 5px;
    appearance: none;
}
.combo svg {
    grid-area: 1 / 2;
    pointer-events: none;
}
.combo.flat {
    border-color: #ababab;
    background: #e1e1e1;
}
.combo.flat select {
    padding-left: 3px;
}
.zoom-level {
    width: 84px;
    margin-left: 2px;
}
.page-size {
    width: 158px;
}
.units {
    width: 90px;
}
.field {
    display: flex;
    align-items: center;
    gap: 2px;
}
.field label {
    min-width: 33px;
    padding-left: 3px;
}
.nudge {
    gap: 3px;
}
.pair {
    display: grid;
    grid-template-columns: 18px 95px;
    align-items: center;
}
.spin {
    display: grid;
    grid-template-columns: 1fr 14px 14px;
    height: 17px;
    border: 1px solid #777;
    background: #fff;
}
.spin.top {
    height: 16px;
    border-bottom: 0;
}
.spin input {
    min-width: 0;
    padding-left: 2px;
}
.spin button {
    display: flex;
    align-items: center;
    justify-content: center;
    height: 13px;
    margin: 1px 1px 0 0;
    border: 1px solid #ababab;
    background: #e8e8e8;
}
.up svg {
    transform: rotate(180deg);
}
.spin.tall {
    grid-template-columns: 1fr 18px;
    grid-template-rows: 1fr 1fr;
    width: 78px;
    height: 24px;
}
.spin.tall input {
    grid-row: 1 / 3;
}
.spin.tall button {
    height: 10px;
}

/* body of the window */
.main {
    display: flex;
    flex: 1;
    min-height: 0;
}
.toolbox {
    display: flex;
    flex-direction: column;
    align-items: center;
    gap: 4px;
    width: 30px;
    padding-top: 2px;
    border-right: 1px solid #d5d5d5;
}
.toolbox .sep {
    width: 22px;
    height: 1px;
    margin: 2px 0 1px;
}
.toolbox .more {
    margin-top: 6px;
}
.fly {
    background: linear-gradient(135deg, transparent 50%, #000 50%) right 1px bottom 1px / 5px 5px no-repeat;
}
.tool.on.fly {
    background: linear-gradient(135deg, #fff 50%, #000 50%) right 1px bottom 1px / 5px 5px no-repeat #fff;
}
.workspace {
    display: flex;
    flex: 1;
    flex-direction: column;
    min-width: 0;
}
.doc-tabs {
    display: flex;
    gap: 1px;
    height: 20px;
    border-bottom: 1px solid #2ba0d0;
    background: #e8e8e8;
}
.doc-tabs button {
    min-width: 86px;
    padding: 0 3px;
    background: #d8d8d8;
    text-align: left;
}
.doc-tabs button + button {
    min-width: 108px;
}
.doc-tabs .active {
    background: #cde0ff;
}
.doc-tabs .new-tab {
    min-width: 19px;
}
.view {
    display: grid;
    flex: 1;
    grid-template-columns: 1fr 18px 18px;
    grid-template-rows: 19px 1fr;
    min-height: 0;
}
.ruler-h, .ruler-end {
    border-bottom: 1px solid #8c8c8c;
}
.ruler-h {
    overflow: hidden;
}
.ruler-v {
    overflow: hidden;
    border-right: 1px solid #8c8c8c;
}
.tick {
    stroke: #8c8c8c;
}
.cursor-mark {
    stroke: #000;
    stroke-dasharray: 3 2;
}
.ruler-text {
    font-size: 9px;
    fill: #888;
    text-anchor: middle;
}
.canvas {
    width: 100%;
    height: 100%;
    background: #fff;
}
.outline {
    fill: none;
    stroke: #e01f26;
    stroke-width: 3.5;
    stroke-linejoin: miter;
}
.art-text {
    font-family: "Liberation Sans", Arial, sans-serif;
    font-size: 48px;
    fill: #231f20;
}
.scroll-v {
    display: flex;
    flex-direction: column;
    background: #fff;
}
.scroll-v button, .scroll-h button {
    display: flex;
    flex: none;
    align-items: center;
    justify-content: center;
    width: 17px;
    height: 17px;
    background: #f0f0f0;
}
.thumb {
    flex: none;
    background: #cdcdcd;
}
.scroll-v .thumb {
    width: 16px;
    height: 21px;
}
.space-before {
    flex: 166;
}
.space-after {
    flex: 284;
}

/* page navigator */
.page-row {
    display: flex;
    height: 18px;
}
.page-nav {
    display: flex;
    flex: 1;
    align-items: center;
    height: 17px;
    padding-left: 3px;
    border-top: 1px solid #8c8c8c;
}
.page-nav button {
    display: flex;
    justify-content: center;
    width: 17px;
}
.page-count {
    width: 62px;
    text-align: center;
}
.page-nav .page-tab {
    width: 57px;
    margin-left: 2px;
    border-left: 1px solid #8c8c8c;
    background: #fff;
}
.scroll-h {
    display: flex;
    flex: 1;
    background: #fff;
}
.scroll-h .thumb {
    width: 31px;
    height: 16px;
}
.h-before {
    flex: 162;
}
.h-after {
    flex: 266;
}
.navigator {
    width: 19px;
    padding-left: 3px;
    background: #fff;
}
.doc-palette {
    display: flex;
    align-items: center;
    gap: 0;
    height: 19px;
    padding-left: 2px;
    border-top: 1px solid #d5d5d5;
}
.doc-palette .chip {
    width: 18px;
    height: 18px;
}
.doc-palette .chip:first-of-type {
    margin-left: 3px;
}
.doc-palette .red {
    border: 1px solid #888;
    border-left: 0;
    background: #ed1c24;
}
.scroll-marks {
    display: flex;
    align-items: center;
    gap: 5px;
    margin-left: auto;
    padding-right: 10px;
}

/* docker */
.dock {
    display: flex;
    flex: none;
    flex-direction: column;
    width: 291px;
    border-left: 3px double #d5d5d5;
    padding-left: 2px;
}
.dock-head {
    display: flex;
    align-items: center;
    gap: 7px;
    height: 20px;
    padding: 0 4px 0 2px;
    background: #e8e8e8;
}
.dock-head h2 {
    flex: 1;
}
.dock-body {
    display: flex;
    flex: 1;
}
.panel {
    flex: 1;
}
.panel-tabs {
    display: flex;
    align-items: center;
    gap: 4px;
    height: 27px;
    border-top: 1px solid #ababab;
    border-bottom: 2px solid #999;
    background: #e8e8e8;
}
.panel-tabs .push {
    margin-left: auto;
}
.props {
    display: flex;
    flex-direction: column;
    gap: 4px;
    padding: 2px 6px 0 3px;
}
.row {
    display: flex;
    align-items: center;
    height: 24px;
}
.row.title {
    height: 22px;
}
.title h3 {
    font-weight: bold;
}
.row > svg {
    margin-right: 2px;
}
.row > input[type="checkbox"] {
    width: 7px;
    height: 7px;
    margin-left: auto;
    border: 1px solid #b0b0b0;
    background: #f8f8f8;
    appearance: none;
}
.row > .inner[type="checkbox"] {
    margin-left: 7px;
}
.width {
    width: 133px;
}
.unit {
    width: 84px;
    margin-left: 6px;
}
.picker {
    display: grid;
    grid-template-columns: 1fr 17px;
    align-items: center;
    width: 133px;
    height: 23px;
    border: 1px solid #ababab;
    background: #fff;
}
.ink {
    height: 17px;
    margin: 0 2px;
    background: #231f20;
}
.line {
    height: 1px;
    margin: 0 2px;
    background: #000;
}
.arrow {
    display: grid;
    place-content: center;
    height: 100%;
    border: 1px solid #ababab;
    background: #e1e1e1;
}
.dots {
    margin-left: 8px;
}
.props hr {
    width: 256px;
    height: 1px;
    margin: 2px 0;
    border: 0;
    background: #d5d5d5;
}
.spin.miter {
    width: 118px;
}
.choices {
    display: flex;
    gap: 6px;
    margin-left: auto;
}
.choices + input[type="checkbox"] {
    margin-left: 7px;
}
.expand {
    display: grid;
    place-content: center;
    width: 100%;
    height: 15px;
    margin-top: 6px;
    background: #e8e8e8;
}
.dock-tabs {
    display: flex;
    flex-direction: column;
    align-items: center;
    gap: 17px;
    width: 20px;
    border-left: 1px solid #2ba0d0;
    background: #e8e8e8;
}
.dock-tab {
    display: flex;
    flex-direction: column;
    align-items: center;
    gap: 5px;
    width: 100%;
    height: 133px;
    padding-top: 3px;
    background: #cde0ff;
}
.dock-tab span {
    writing-mode: vertical-rl;
}

/* color palette */
.palette {
    display: flex;
    flex-direction: column;
    width: 19px;
    border-left: 1px solid #d5d5d5;
}
.swatches {
    flex: 1;
    min-height: 0;
    overflow: hidden;
}
.swatches button {
    display: block;
    width: 18px;
    height: 17px;
    border: 1px solid #58595b;
    border-top: 0;
}
.swatches button:first-child {
    border: 0;
}

/* status bar */
.status {
    display: flex;
    align-items: center;
    height: 34px;
    padding: 0 36px 0 5px;
    border-top: 1px solid #d5d5d5;
}
.play {
    display: grid;
    place-content: center;
    width: 15px;
    height: 15px;
    margin-left: 10px;
    border: 1px solid #000;
}
.fill-info {
    display: flex;
    align-items: center;
    gap: 4px;
    width: 228px;
    margin-left: auto;
}
.fill-info svg:first-child {
    margin-right: 6px;
}
.outline-info {
    display: flex;
    align-items: center;
    gap: 4px;
    height: 22px;
    padding-left: 10px;
    border-left: 1px solid #d5d5d5;
}
.ink-chip {
    width: 18px;
    height: 18px;
    border: 1px solid #888;
    background: #231f20;
}
```

FILE: script.js
```js
const svgNS = 'http://www.w3.org/2000/svg';
const step = 94.4 / 10; // half a millimeter on screen

function add(parent, tag, attrs, text) {
    const el = document.createElementNS(svgNS, tag);
    for (const key in attrs) el.setAttribute(key, attrs[key]);
    if (text) el.textContent = text;
    parent.appendChild(el);
}

// length of a tick: every 5 mm is longest, halfway a bit taller than the dots
function tickLength(i) {
    if (i % 10 === 0) return 5;
    return i % 5 === 0 ? 3 : 1;
}

function drawRulerH() {
    const ruler = document.getElementById('rulerH');
    const end = ruler.clientWidth;
    for (let i = -5; 48 + i * step < end; i++) {
        const x = Math.round(48 + i * step) + 0.5;
        add(ruler, 'line', { class: 'tick', x1: x, x2: x, y1: 17 - tickLength(i), y2: 17 });
        if (i % 10 === 0 && x < end - 60) {
            add(ruler, 'text', { class: 'ruler-text', x: x, y: 11 }, String(80 + i / 2));
        }
    }
    add(ruler, 'text', { class: 'ruler-text', x: end - 27, y: 11 }, 'millimeters');
    add(ruler, 'line', { class: 'cursor-mark', x1: end - 3.5, x2: end - 3.5, y1: 0, y2: 18 });
}

function drawRulerV() {
    const ruler = document.getElementById('rulerV');
    const end = ruler.clientHeight;
    for (let i = -3; 29 + i * step < end; i++) {
        const y = Math.round(29 + i * step) + 0.5;
        add(ruler, 'line', { class: 'tick', x1: 16 - tickLength(i), x2: 16, y1: y, y2: y });
        if (i % 10 === 0 && y < end - 60) {
            add(ruler, 'text', { class: 'ruler-text', transform: `translate(10 ${y}) rotate(-90)` }, String(230 - i / 2));
        }
    }
    add(ruler, 'text', { class: 'ruler-text', transform: `translate(10 ${end - 27}) rotate(-90)` }, 'millimeters');
    add(ruler, 'line', { class: 'cursor-mark', x1: 0, x2: 16, y1: end - 28.5, y2: end - 28.5 });
}

const colors = [
    '#231f20', '#414042', '#58595b', '#6d6e71', '#808285', '#939598', '#a7a9ac',
    '#bcbec0', '#d1d3d4', '#e6e7e8', '#ffffff', '#2e3192', '#00aeef', '#00a651',
    '#fff200', '#ed1c24', '#ec008c', '#a54686', '#f58220', '#f5a8ab', '#7f6860',
    '#c7c2e0', '#9a91c6', '#6a8ac6', '#756bb1', '#857aa6', '#455a88', '#4f4a66'
];

function drawSwatches() {
    const list = document.getElementById('swatches');
    colors.forEach(color => {
        const button = document.createElement('button');
        button.setAttribute('aria-label', color);
        button.style.background = color;
        list.appendChild(button);
    });
}

drawRulerH();
drawRulerV();
drawSwatches();
```
